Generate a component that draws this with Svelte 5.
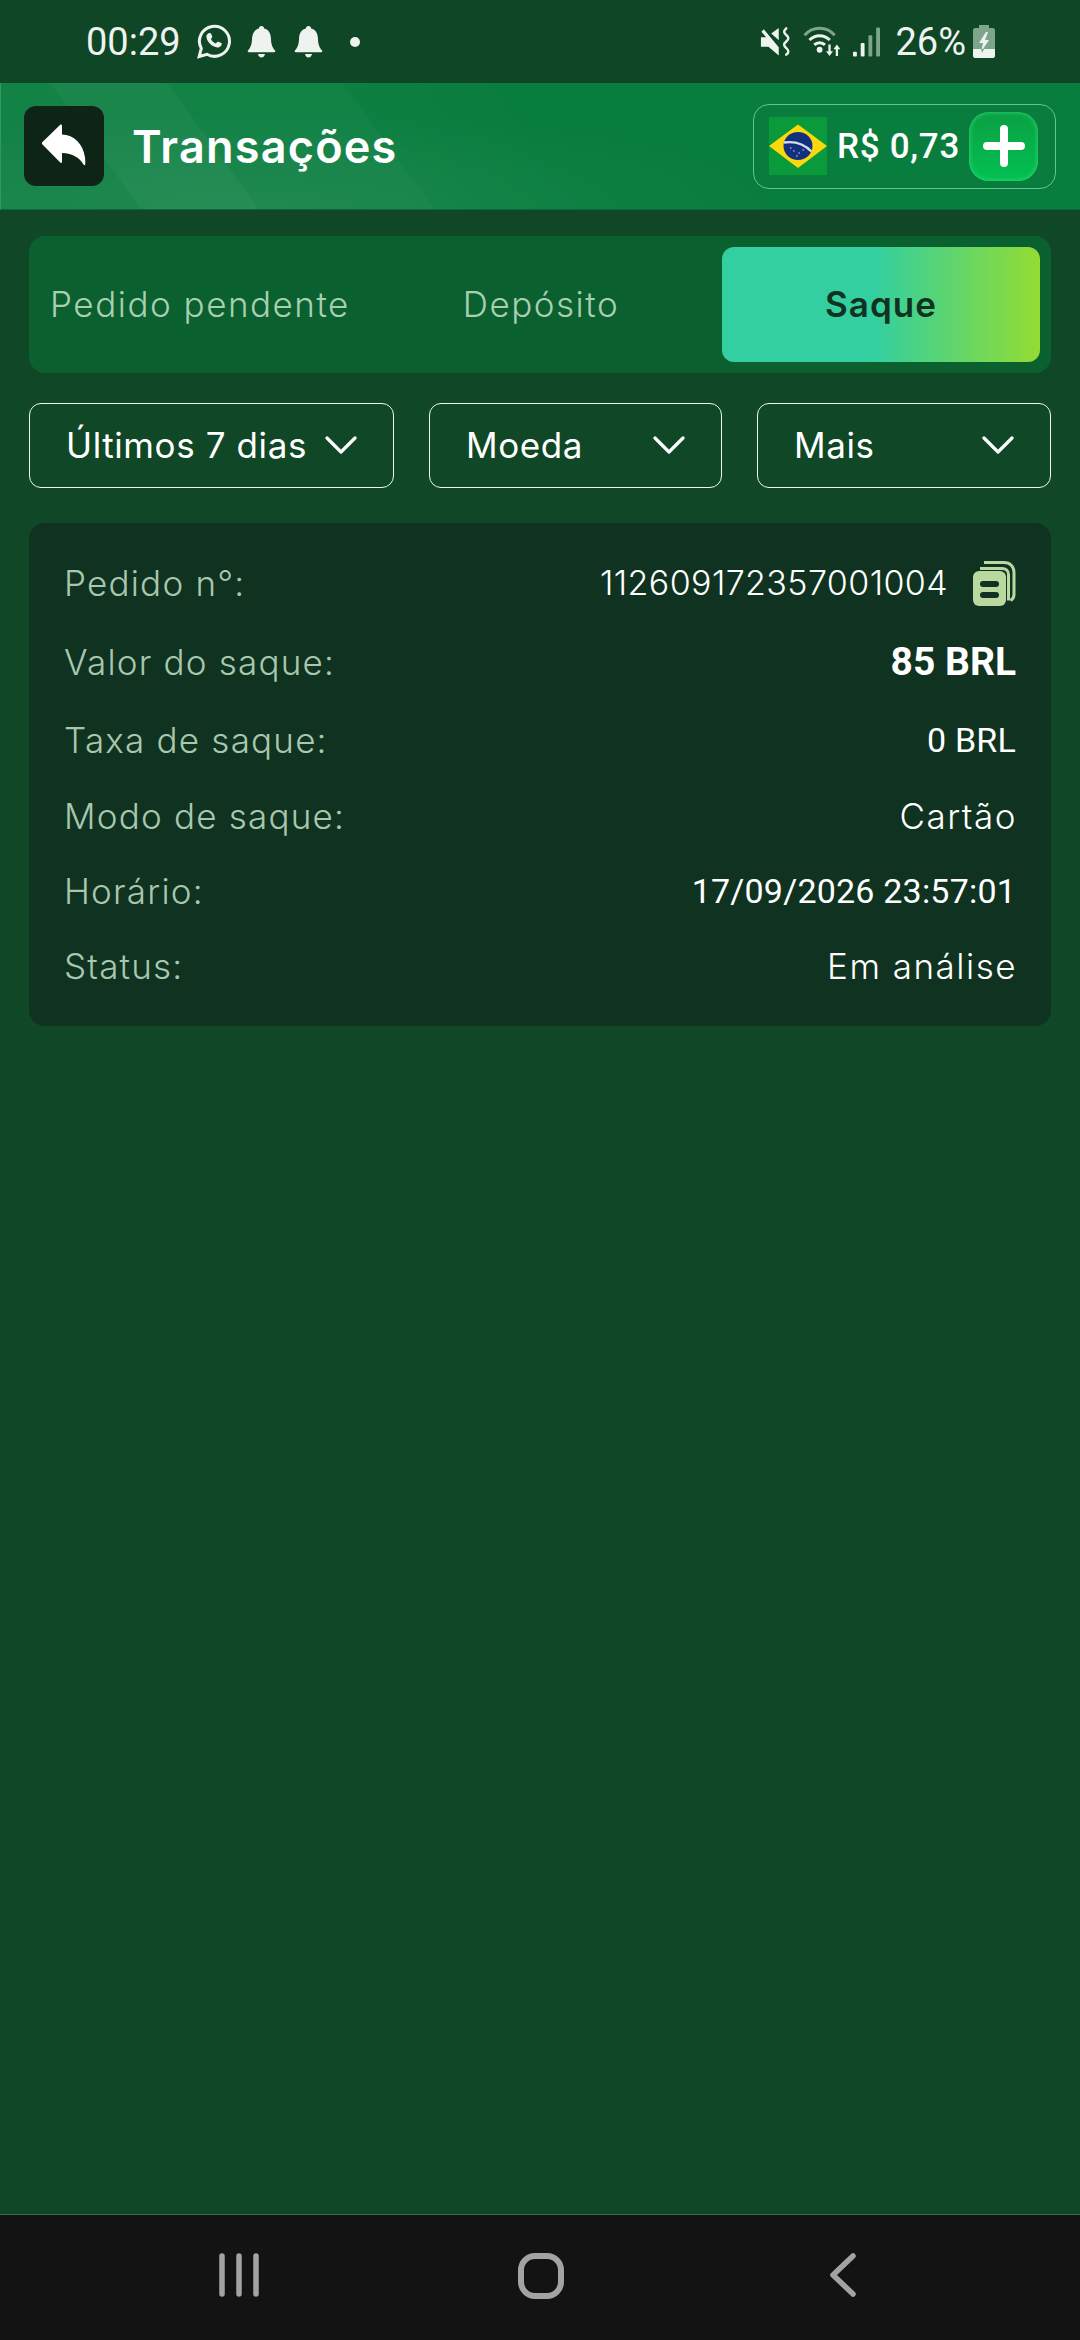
<script>
  const rows = [
    { label: 'Pedido n°:', value: '112609172357001004', copy: true, h: 79, cls: 'num' },
    { label: 'Valor do saque:', value: '85 BRL', h: 79, cls: 'big' },
    { label: 'Taxa de saque:', value: '0 BRL', h: 77, cls: 'rob' },
    { label: 'Modo de saque:', value: 'Cartão', h: 75, cls: 'mont' },
    { label: 'Horário:', value: '17/09/2026 23:57:01', h: 75, cls: 'rob' },
    { label: 'Status:', value: 'Em análise', h: 75, cls: 'mont' },
  ];
  const filters = [
    { label: 'Últimos 7 dias', w: 365 },
    { label: 'Moeda', w: 293 },
    { label: 'Mais', w: 294 },
  ];
</script>

{#snippet bell()}
  <svg class="bell" width="29" height="32" viewBox="0 0 28 32">
    <path fill="#eef3ef" d="M14 0c1.600 0 2.600 1 2.600 2.600 4.600 1.200 6.600 4.800 6.800 9.400.2 5 .8 9 4.200 12.600.5.8.2 1.600-.8 1.600H1.200c-1 0-1.300-.8-.8-1.600C3.800 21 4.400 17 4.600 12c.2-4.600 2.200-8.200 6.800-9.400C11.400 1 12.400 0 14 0zM10.500 28h7c-.3 2-1.600 3.400-3.500 3.400S10.800 30 10.500 28z"/>
  </svg>
{/snippet}

<div class="app">
  <div class="status">
    <span class="time">00:29</span>
    <svg class="wa" width="34" height="35" viewBox="0 0 34 35">
      <path fill="none" stroke="#eef3ef" stroke-width="3" d="M2.200 32.500l2.100-8A15 15 0 1 1 10 30.300z"/>
      <path fill="#eef3ef" d="M12 9.200c.8-.5 1.600-.4 2 .4l1.200 2.700c.2.500 0 1-.3 1.400l-1 1.200c1 2 2.800 3.700 5 4.700l1.300-1.500c.4-.4.800-.5 1.300-.3l2.700 1.300c.6.300.7.800.5 1.500-.5 2-2.300 3-4.300 2.800-5.500-.7-10.500-5.700-11-10.500-.2-1.700.9-3.200 2.600-4z"/>
    </svg>
    {@render bell()}
    {@render bell()}
    <span class="dot"></span>
    <span class="spacer"></span>
    <svg class="mute" width="30" height="32" viewBox="0 0 32 32">
      <path fill="#eef3ef" d="M1 11h5.500L1.500 5 4 2.500 20 21.500V30.500L9 21H1zM12 7l8-6v13z"/>
      <path fill="none" stroke="#eef3ef" stroke-width="2.600" stroke-linecap="round" d="M28 1.500c-3 3-3 4.500 0 7s3 4.500 0 7-3 4.500 0 7 3 4.500 0 7"/>
    </svg>
    <svg class="wifi" width="41" height="33" viewBox="0 0 42 34">
      <path fill="none" stroke="#7ea48c" stroke-width="3" d="M1.500 10.500C10 1 24 1 32.500 10.500"/>
      <path fill="none" stroke="#eef3ef" stroke-width="3" d="M6.500 15.500c6-6 15-6 21 0M11.500 20.500c3-3 8-3 11 0"/>
      <circle cx="17" cy="25.500" r="3" fill="#eef3ef"/>
      <path fill="#eef3ef" d="M26 20h2.400v7h2.400l-3.600 5-3.600-5H26zM36 32h-2.400v-7h-2.400l3.600-5 3.600 5H36z"/>
    </svg>
    <svg class="signal" width="27" height="32" viewBox="0 0 28 32">
      <rect x="0" y="26" width="4" height="5" rx="1" fill="#eef3ef"/>
      <rect x="8" y="17" width="4" height="14" rx="1" fill="#eef3ef"/>
      <rect x="16" y="9" width="4" height="22" rx="1" fill="#7ea48c"/>
      <rect x="24" y="1" width="4" height="30" rx="1" fill="#7ea48c"/>
    </svg>
    <span class="batt">26%</span>
    <svg class="battery" width="22" height="33" viewBox="0 0 22 33">
      <path fill="#7ea48c" d="M6 0h10v3h4c1 0 2 1 2 2v21H0V5c0-1 1-2 2-2h4z"/>
      <path fill="#eef3ef" d="M0 24h22v7c0 1-1 2-2 2H2c-1 0-2-1-2-2z"/>
      <path fill="#eef3ef" d="M13 7l-7 11h4l-2 9 8-12h-4l3-8z"/>
      <path fill="#7ea48c" d="M8 24h3l-2 4z"/>
    </svg>
  </div>

  <header>
    <button class="back" aria-label="Voltar">
      <svg width="46" height="46" viewBox="0 0 46 46">
        <path fill="#fff" d="M19.500 1.500c.7-.3 1.500.3 1.500 1.200v8.800c12 .5 21 9 23 23 .3 2 .4 5 .2 7-.2 1-1 1-1.500.3-4-7-11-11.500-21.700-11.800v8.800c0 1-.8 1.500-1.500 1L1.500 21.500c-.8-.8-.8-1.800 0-2.500z"/>
      </svg>
    </button>
    <h1>Transações</h1>
    <div class="balance">
      <svg class="flag" width="58" height="58" viewBox="0 0 56 58" preserveAspectRatio="none">
        <rect width="56" height="58" fill="#0a9a3c"/>
        <path fill="#fcd80c" d="M28 7.500 56 29 28 51 0 29z"/>
        <circle cx="28" cy="29" r="14" fill="#13307f"/>
        <path fill="none" stroke="#d5dcea" stroke-width="2.400" d="M14.500 25.500c10-1.500 19.500 1.500 26.500 9"/>
        <g fill="#b9c6e6"><circle cx="24" cy="34" r=".8"/><circle cx="29" cy="36" r=".8"/><circle cx="33" cy="33" r=".8"/><circle cx="27" cy="39" r=".8"/><circle cx="21" cy="31" r=".8"/></g>
      </svg>
      <span class="amount">R$ 0,73</span>
      <button class="plus" aria-label="Adicionar">
        <svg width="42" height="42" viewBox="0 0 42 42">
          <path fill="none" stroke="#fff" stroke-width="8" stroke-linecap="round" d="M21 4v34M4 21h34"/>
        </svg>
      </button>
    </div>
  </header>

  <main>
    <div class="tabs">
      <div class="tab">Pedido pendente</div>
      <div class="tab">Depósito</div>
      <div class="tab active">Saque</div>
    </div>

    <div class="filters">
      {#each filters as f}
        <div class="filter" style="width: {f.w}px">
          <span>{f.label}</span>
          <svg width="32" height="20" viewBox="0 0 32 20">
            <path fill="none" stroke="#fff" stroke-width="3.200" stroke-linecap="round" stroke-linejoin="round" d="M2 3l14 14L30 3"/>
          </svg>
        </div>
      {/each}
    </div>

    <div class="card">
      {#each rows as r}
        <div class="row" style="height: {r.h}px">
          <span class="label">{r.label}</span>
          <span class="value {r.cls}">{r.value}</span>
          {#if r.copy}
            <svg class="copy" width="44" height="46" viewBox="0 0 44 46">
              <path fill="none" stroke="#b9d9a0" stroke-width="3" d="M12 2.500h20c6 0 10 4 10 10v22c0 3-1.500 5-3.500 6"/>
              <path fill="none" stroke="#b9d9a0" stroke-width="3" d="M8 8.500h22c4 0 6.500 2.500 6.500 6v26"/>
              <rect x="1" y="11" width="33" height="35" rx="6" fill="#b9d9a0"/>
              <rect x="8" y="21" width="19" height="6" rx="3" fill="#0f3320"/>
              <rect x="8" y="32" width="19" height="6" rx="3" fill="#0f3320"/>
            </svg>
          {/if}
        </div>
      {/each}
    </div>
  </main>

  <nav>
    <div class="nav-item">
      <svg width="40" height="44" viewBox="0 0 40 44">
        <path fill="none" stroke="#a3a3a3" stroke-width="5.500" stroke-linecap="round" d="M3 3v38M20 3v38M37 3v38"/>
      </svg>
    </div>
    <div class="nav-item">
      <svg width="46" height="46" viewBox="0 0 46 46">
        <rect x="3" y="3" width="40" height="40" rx="14" fill="none" stroke="#a3a3a3" stroke-width="6"/>
      </svg>
    </div>
    <div class="nav-item">
      <svg width="26" height="44" viewBox="0 0 26 44">
        <path fill="none" stroke="#a3a3a3" stroke-width="5.500" stroke-linecap="round" stroke-linejoin="round" d="M23 3 3 22l20 19"/>
      </svg>
    </div>
  </nav>
</div>

<style>
  :global(body) {
    margin: 0;
    background: #0f4727;
    font-family: Inter, "Noto Sans", sans-serif;
    color: #fff;
  }
  .app {
    display: flex;
    flex-direction: column;
    height: 2340px;
    width: 1080px;
    overflow: hidden;
  }
  .status {
    height: 83px;
    flex: none;
    display: flex;
    align-items: center;
    padding: 0 85px 0 86px;
    box-sizing: border-box;
    background: #0f4626;
    font-family: Roboto, sans-serif;
    color: #eef3ef;
    font-size: 38px;
  }
  .time { margin-right: 16px; }
  .wa { margin-right: 16px; }
  .bell { margin-right: 18px; }
  .dot {
    width: 10px;
    height: 10px;
    border-radius: 50%;
    background: #eef3ef;
    margin-left: 9px;
  }
  .spacer { flex: 1; }
  .mute { margin-right: 13px; }
  .wifi { margin-right: 9px; }
  .signal { margin-right: 15px; }
  .batt { margin-right: 7px; }

  header {
    height: 127px;
    flex: none;
    box-sizing: border-box;
    display: flex;
    align-items: center;
    padding: 0 24px 0 23px;
    border-bottom: 1px solid #0a6a37;
    border-left: 1px solid #2e9a5e;
    background:
      radial-gradient(ellipse 520px 100px at 260px 100%, rgba(255,255,255,0.06), transparent),
      linear-gradient(54deg, rgba(255,255,255,0.04) 0 12%, rgba(255,255,255,0.07) 12% 22%, rgba(255,255,255,0.035) 22% 37%, rgba(255,255,255,0.015) 37%, transparent 52%),
      #097d3e;
  }
  .back {
    width: 80px;
    height: 80px;
    flex: none;
    border: none;
    border-radius: 12px;
    background: #0e2417;
    display: flex;
    align-items: center;
    justify-content: center;
    padding: 0;
    margin-right: 28px;
  }
  h1 {
    margin: 0;
    font-size: 45px;
    font-weight: 600;
    color: #fff;
    letter-spacing: 1.2px;
    flex: 1;
  }
  .balance {
    width: 303px;
    height: 85px;
    flex: none;
    box-sizing: border-box;
    border: 1.5px solid #5cc98d;
    border-radius: 16px;
    display: flex;
    align-items: center;
    padding: 0 17px 0 15px;
  }
  .flag { margin-right: 10px; flex: none; }
  .amount {
    font-family: Roboto, sans-serif;
    font-weight: 500;
    font-size: 35px;
    letter-spacing: 0.7px;
    flex: 1;
    white-space: nowrap;
  }
  .plus {
    width: 69px;
    height: 69px;
    flex: none;
    border: none;
    padding: 0;
    border-radius: 20px;
    background: linear-gradient(180deg, #0aa043, #03c052);
    box-shadow: inset 0 0 5px #2fe07c;
    display: flex;
    align-items: center;
    justify-content: center;
  }

  main {
    flex: 1;
    padding: 26px 29px 0;
    display: flex;
    flex-direction: column;
  }
  .tabs {
    height: 137px;
    box-sizing: border-box;
    padding: 11px;
    background: #0b6030;
    border-radius: 16px;
    display: grid;
    grid-template-columns: 320px 1fr 318px;
  }
  .tab {
    display: flex;
    align-items: center;
    justify-content: center;
    padding-bottom: 2px;
    font-size: 35px;
    font-weight: 300;
    color: #a9cfb0;
    letter-spacing: 1.5px;
  }
  .tab.active {
    background: linear-gradient(90deg, #33cfa0 0 48%, #93dc33 100%);
    border-radius: 12px;
    color: #10321f;
    font-weight: 600;
    letter-spacing: 1px;
  }
  .filters {
    margin-top: 30px;
    display: flex;
    justify-content: space-between;
  }
  .filter {
    height: 85px;
    box-sizing: border-box;
    border: 1.5px solid #f2f6f3;
    border-radius: 12px;
    display: flex;
    align-items: center;
    justify-content: space-between;
    padding: 0 36px;
    padding-bottom: 2px;
    font-size: 35px;
    font-weight: 400;
    letter-spacing: 0.6px;
  }
  .card {
    margin-top: 35px;
    height: 503px;
    box-sizing: border-box;
    padding: 20px 35px 0;
    background: #0f3320;
    border-radius: 16px;
    display: flex;
    flex-direction: column;
  }
  .row {
    display: flex;
    align-items: center;
  }
  .label {
    flex: 1;
    font-size: 35px;
    font-weight: 300;
    color: #a9c7ae;
    letter-spacing: 1.2px;
  }
  .value.mont { font-size: 35px; font-weight: 300; letter-spacing: 1.5px; margin-right: -1px; }
  .value.num { font-size: 34px; font-weight: 300; letter-spacing: 0.4px; }
  .value.rob { font-family: Roboto, sans-serif; font-size: 34px; letter-spacing: 0.2px; }
  .value.big { font-family: Roboto, sans-serif; font-size: 39px; font-weight: 700; }
  .copy { margin-left: 24px; }

  nav {
    height: 126px;
    flex: none;
    box-sizing: border-box;
    border-top: 1px solid #3a6a4a;
    background: #131313;
    display: grid;
    grid-template-columns: repeat(3, 302px);
    padding: 38px 0 0 88px;
  }
  .nav-item {
    display: flex;
    justify-content: center;
    align-items: flex-start;
  }
</style>
